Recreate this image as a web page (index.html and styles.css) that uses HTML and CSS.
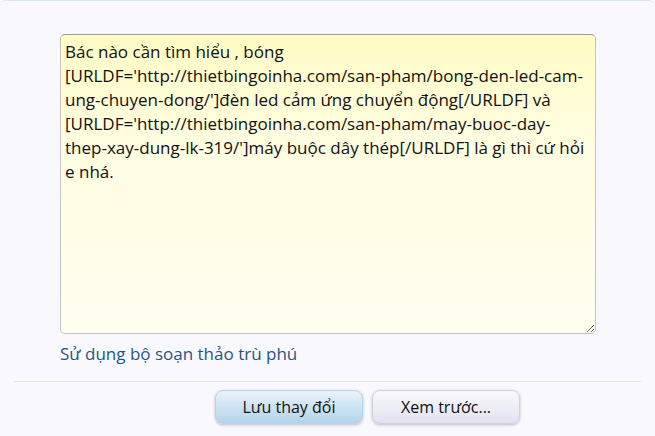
FILE: index.html
```html
<!DOCTYPE html>
<html>
<head>
    <meta charset="UTF-8">
    <title>Sửa bài viết</title>
    <link rel="stylesheet" href="styles.css">
</head>
<body>

<div class="panel">
    <div class="editor">
        <textarea class="message" spellcheck="false">Bác nào cần tìm hiểu , bóng [URLDF='http://thietbingoinha.com/san-pham/bong-den-led-cam-ung-chuyen-dong/']đèn led cảm ứng chuyển động[/URLDF] và [URLDF='http://thietbingoinha.com/san-pham/may-buoc-day-thep-xay-dung-lk-319/']máy buộc dây thép[/URLDF] là gì thì cứ hỏi e nhá.</textarea>
        <a href="#" class="rich-link">Sử dụng bộ soạn thảo trù phú</a>
    </div>

    <div class="submit-row">
        <button class="button primary">Lưu thay đổi</button>
        <button class="button">Xem trước...</button>
    </div>
</div>

</body>
</html>
```

FILE: styles.css
```css
body {
    margin: 0;
    padding: 0;
    background-color: #f9f9fd;
    font-family: "Open Sans", sans-serif;
}

.panel {
    height: 436px;
    box-sizing: border-box;
    border-top: 1px solid #d7e6f4;
    border-radius: 6px 6px 0 0;
}

/* Editor area */
.editor {
    padding: 33px 60px 0 60px;
    display: flex;
    flex-direction: column;
    align-items: flex-start;
}

.message {
    width: 536px;
    height: 300px;
    box-sizing: border-box;
    margin: 0;
    padding: 5px 4px;
    border: 1px solid #c4c4c4;
    border-top-color: #9a9a9a;
    border-radius: 5px;
    background: linear-gradient(to bottom, #fffcc4 0%, #fffde0 35%, #fefff0 100%);
    font-family: "Open Sans", sans-serif;
    font-size: 17px;
    line-height: 24px;
    color: #111;
    resize: both;
    outline: none;
}

.rich-link {
    margin-top: 9px;
    font-size: 17px;
    line-height: 22px;
    color: #1f5583;
    text-decoration: none;
}

/* Button row */
.submit-row {
    margin: 16px 14px 0 14px;
    padding-top: 8px;
    border-top: 1px solid #dbe8f4;
    display: flex;
    gap: 9px;
    padding-left: 201px;
}

.button {
    width: 148px;
    height: 34px;
    border: 1px solid #d0d2de;
    border-radius: 8px;
    background: linear-gradient(to bottom, #f9f9fd 0%, #e1e2ee 100%);
    box-shadow: 0 1px 3px rgba(0, 0, 0, 0.25);
    font-family: "Open Sans", sans-serif;
    font-size: 16px;
    color: #111;
    cursor: pointer;
}

.button.primary {
    border-color: #b9d3e6;
    background: linear-gradient(to bottom, #eaf3fa 0%, #b2d4ea 100%);
}
```
